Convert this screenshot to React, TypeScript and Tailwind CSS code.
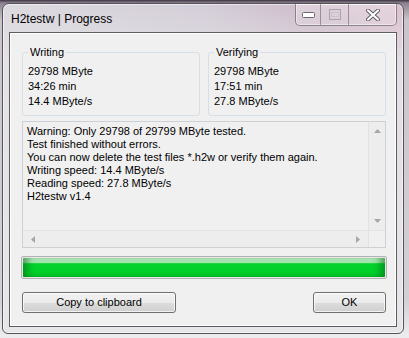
const ui = { fontFamily: '"Liberation Sans", Arial, sans-serif' };

function GroupBox({ title, lines }: { title: string; lines: string[] }) {
  return (
    <div className="relative w-[178px] h-[64px] rounded-[3px] border border-[#d5dfe5]">
      <span className="absolute left-[5px] top-[-8px] px-[2px] bg-[#f0f0f0] text-[11px] leading-[14px] text-black">{title}</span>
      <div className="pl-[5px] pt-[11px] text-[11px] leading-[15px] text-black">
        {lines.map((l) => (
          <div key={l}>{l}</div>
        ))}
      </div>
    </div>
  );
}

function Arrow({ dir }: { dir: "up" | "down" | "left" | "right" }) {
  const pts = {
    up: "0,4 7,4 3.5,0",
    down: "0,0 7,0 3.5,4",
    left: "4,0 4,7 0,3.5",
    right: "0,0 0,7 4,3.5",
  }[dir];
  const w = dir === "up" || dir === "down" ? 7 : 4;
  const h = dir === "up" || dir === "down" ? 4 : 7;
  return (
    <svg width={w} height={h} viewBox={`0 0 ${w} ${h}`}>
      <polygon points={pts} fill="#a6a6a6" />
    </svg>
  );
}

function Button({ label, className }: { label: string; className: string }) {
  return (
    <div
      className={
        "h-[21px] rounded-[3px] border border-[#707070] bg-[linear-gradient(to_bottom,#f2f2f2_0%,#ebebeb_50%,#dddddd_51%,#cfcfcf_100%)] shadow-[inset_0_0_0_1px_rgba(255,255,255,0.7)] flex items-center justify-center text-[11px] text-black " +
        className
      }
    >
      {label}
    </div>
  );
}

export default function App() {
  const memo = [
    "Warning: Only 29798 of 29799 MByte tested.",
    "Test finished without errors.",
    "You can now delete the test files *.h2w or verify them again.",
    "Writing speed: 14.4 MByte/s",
    "Reading speed: 27.8 MByte/s",
    "H2testw v1.4",
  ];

  return (
    <div
      style={ui}
      className="w-[409px] h-[338px] overflow-hidden pt-[3px] pl-[2px] bg-[linear-gradient(to_bottom,#3d3542_0px,#8d8290_3px,#c9c4cb_20px,#d3d0d5_300px,#ecebed_335px)]"
    >
      <div className="w-[402px] h-[331px] flex flex-col rounded-t-[7px] rounded-b-[6px] border border-[#56525a] px-[6px] pb-[6px] shadow-[inset_0_0_0_1px_rgba(255,255,255,0.55)] bg-[linear-gradient(to_bottom,rgba(228,227,231,0)_0px,rgba(228,227,231,0.85)_60px,#e6e5e8_100%),linear-gradient(100deg,#dcd9df_0%,#d3cdd7_45%,#cdb9c9_70%,#dbbfcc_88%,#d2cad5_100%)]">
        {/* title bar */}
        <div className="h-[28px] flex items-start justify-between">
          <div className="pl-[2px] mt-[7px] text-[12px] leading-[16px] text-black">H2testw | Progress</div>
          <div className="flex h-[22px] rounded-b-[5px] border border-t-0 border-[rgba(70,62,78,0.55)] bg-[linear-gradient(to_bottom,rgba(255,255,255,0.35),rgba(255,255,255,0.15))] shadow-[inset_0_0_0_1px_rgba(255,255,255,0.45)] overflow-hidden">
            <div className="w-[25px] flex items-center justify-center border-r border-[rgba(70,62,78,0.45)]">
              <svg width="13" height="6" viewBox="0 0 13 6">
                <rect x="0.5" y="0.5" width="12" height="5" rx="1" fill="#fff" stroke="#6b6670" />
              </svg>
            </div>
            <div className="w-[28px] flex items-center justify-center border-r border-[rgba(70,62,78,0.45)]">
              <svg width="12" height="11" viewBox="0 0 12 11">
                <rect x="0.5" y="0.5" width="11" height="10" fill="none" stroke="#a9a3ab" />
                <rect x="2.5" y="3.5" width="7" height="4" fill="none" stroke="#c9c4cb" />
              </svg>
            </div>
            <div className="w-[47px] flex items-center justify-center">
              <svg width="14" height="12" viewBox="0 0 14 12">
                <path d="M2 1.5 L12 10.5 M12 1.5 L2 10.5" stroke="#5d5862" strokeWidth="4" strokeLinecap="round" />
                <path d="M2 1.5 L12 10.5 M12 1.5 L2 10.5" stroke="#ffffff" strokeWidth="2.2" strokeLinecap="round" />
              </svg>
            </div>
          </div>
        </div>

        {/* client area */}
        <div className="flex-1 border border-[#5e5b62] bg-[#f0f0f0] shadow-[inset_0_0_0_1px_#ffffff] flex flex-col pl-[12px] pr-[10px] pt-[19px]">
          <div className="flex gap-[8px]">
            <GroupBox title="Writing" lines={["29798 MByte", "34:26 min", "14.4 MByte/s"]} />
            <GroupBox title="Verifying" lines={["29798 MByte", "17:51 min", "27.8 MByte/s"]} />
          </div>

          {/* memo */}
          <div className="mt-[5px] h-[127px] border border-[#cdd1d6] bg-[#f0f0f0] grid grid-cols-[1fr_17px] grid-rows-[1fr_17px]">
            <div className="pl-[4px] pt-[3px] text-[11px] leading-[13px] text-black whitespace-nowrap overflow-hidden">
              {memo.map((l) => (
                <div key={l}>{l}</div>
              ))}
            </div>
            <div className="border-l border-[#e2e2e2] bg-[#ededed] flex flex-col items-center justify-between py-[7px]">
              <Arrow dir="up" />
              <Arrow dir="down" />
            </div>
            <div className="border-t border-[#e2e2e2] bg-[#ededed] flex items-center justify-between px-[8px]">
              <Arrow dir="left" />
              <Arrow dir="right" />
            </div>
            <div className="bg-[#f0f0f0] border-t border-l border-[#e2e2e2]" />
          </div>

          {/* progress */}
          <div className="mt-[8px] -ml-[1px] w-[366px] h-[23px] rounded-[2px] border border-[#b2b2b2] p-[1px] bg-[#e6e6e6]">
            <div className="h-full rounded-[1px] bg-[linear-gradient(to_bottom,#c9f2cf_0%,#9ee8a9_25%,#04d22d_30%,#00d02a_80%,#03c528_100%)] shadow-[inset_8px_0_7px_-3px_rgba(0,110,20,0.55),inset_-8px_0_7px_-3px_rgba(0,110,20,0.55)]" />
          </div>

          {/* buttons */}
          <div className="mt-[13px] flex justify-between">
            <Button label="Copy to clipboard" className="w-[154px]" />
            <Button label="OK" className="w-[73px]" />
          </div>
        </div>
      </div>
    </div>
  );
}
